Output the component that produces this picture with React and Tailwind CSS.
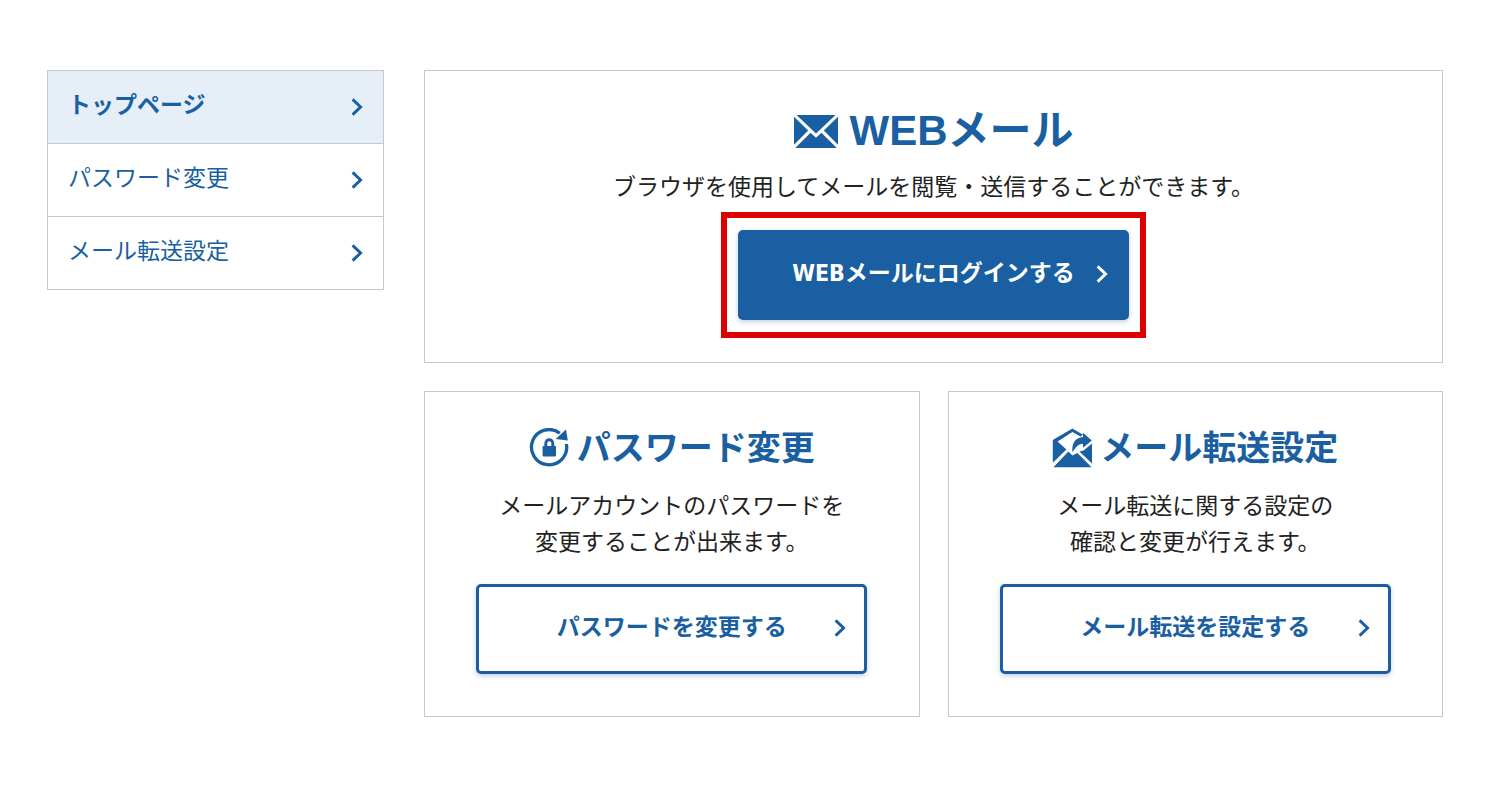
import React from "react";

function Chevron({ className = "" }) {
  return (
    <svg viewBox="0 0 12 18" className={`h-[18px] w-3 shrink-0 ${className}`} fill="none" stroke="currentColor" strokeWidth="2.9" aria-hidden="true">
      <path d="M1.6 1.4 L9.6 9 L1.6 16.6" />
    </svg>
  );
}

function MailIcon() {
  return (
    <svg viewBox="0 0 44 33" className="h-[33px] w-11 shrink-0" fill="currentColor" aria-hidden="true">
      <path d="M2.5 0 H41.5 L26.5 14.2 L22 18.6 L17.5 14.2 Z" />
      <path d="M0 1.8 L14.2 15.4 L0 29.8 Z" />
      <path d="M44 1.8 L29.8 15.4 L44 29.8 Z" />
      <path d="M1.2 33 L16.6 17.8 L22 22.8 L27.4 17.8 L42.8 33 Z" />
    </svg>
  );
}

function PasswordIcon() {
  return (
    <svg viewBox="0 0 40 40" className="size-10 shrink-0" fill="none" stroke="currentColor" aria-hidden="true">
      <path d="M30.8 5.2 A17.6 17.6 0 1 0 37.4 16" strokeWidth="3.3" />
      <path d="M37 1.4 L38.8 12.6 L26.6 11 Z" fill="currentColor" stroke="none" />
      <rect x="13.6" y="18" width="13.4" height="10.4" rx="0.8" fill="currentColor" stroke="none" />
      <path d="M16.8 18.6 V15.4 A3.5 3.6 0 0 1 23.8 15.4 V18.6" strokeWidth="2.9" />
    </svg>
  );
}

function ForwardIcon() {
  return (
    <svg viewBox="0 0 40 40" className="size-10 shrink-0" fill="currentColor" aria-hidden="true">
      <path d="M0.8 12 L20.4 0.4 L31 6.8 L28.6 8.4 L20.4 4 L5.6 13.4 L14.4 21.4 L0.8 34.8 Z" />
      <path d="M31 4.8 L39.8 12.4 L31 19.8 V15.8 C26.6 15.8 24.4 18.6 20.4 24.2 C19.6 15.6 23 9.6 31 9 Z" />
      <path d="M40 15.6 V35.4 L27.4 23.6 L31.6 22.4 Z" />
      <path d="M1.4 39.2 L16.4 23.4 L20.4 27.4 L25.4 25 L39.6 39.2 Z" />
    </svg>
  );
}

const menu = [
  { label: "トップページ", active: true },
  { label: "パスワード変更" },
  { label: "メール転送設定" },
];

function Sidebar() {
  return (
    <nav className="w-[337px] shrink-0 border border-[#c8c8c8]" aria-label="メニュー">
      <ul className="divide-y divide-[#c8c8c8]">
        {menu.map((item) => (
          <li key={item.label}>
            <a
              href="#"
              aria-current={item.active ? "page" : undefined}
              className={`flex items-center justify-between pt-4 pr-5 pb-5 pl-5 text-[23px] leading-9 ${item.active ? "bg-[#e6eef8] font-bold" : ""}`}
            >
              <span>{item.label}</span>
              <Chevron className="mt-1" />
            </a>
          </li>
        ))}
      </ul>
    </nav>
  );
}

function ActionButton({ children, primary }) {
  return (
    <button
      type="button"
      className={`grid w-[391px] max-w-full grid-cols-[20px_1fr_20px] items-center rounded-[5px] border-3 border-[#195fa1] px-[18px] pt-[22px] pb-[26px] text-[23px] leading-9 font-bold shadow-[0_2px_5px_rgba(25,60,130,0.25)] ${primary ? "bg-[#195fa1] text-white" : "bg-white"}`}
    >
      <span className="col-start-2 whitespace-nowrap">{children}</span>
      <Chevron className="mt-0.5 justify-self-end" />
    </button>
  );
}

function Card({ icon, title, lines, button }) {
  return (
    <section className="flex min-w-0 flex-1 flex-col items-center border border-[#c8c8c8] px-4 pt-[30px] pb-[42px]">
      <h2 className="flex items-center gap-2 text-[34px] leading-[52px] font-bold">
        {icon}
        {title}
      </h2>
      <p className="mt-[14px] mb-6 text-center text-[23px] leading-9 text-[#222222]">
        {lines[0]}
        <br />
        {lines[1]}
      </p>
      <ActionButton>{button}</ActionButton>
    </section>
  );
}

export default function App() {
  return (
    <div className="flex min-h-screen items-start gap-10 bg-white px-[47px] py-[70px] font-['DejaVu_Sans_Condensed','Noto_Sans_CJK_JP',sans-serif] text-[#195fa1]">
      <Sidebar />
      <main className="flex min-w-0 flex-1 flex-col gap-7">
        <section className="flex flex-col items-center border border-[#c8c8c8] pt-7 pb-6">
          <h1 className="flex items-center gap-3 font-['Liberation_Sans','Noto_Sans_CJK_JP',sans-serif] text-[42px] leading-[64px] font-bold">
            <MailIcon />
            WEBメール
          </h1>
          <p className="mt-1 mb-[9px] text-center font-['Noto_Sans_CJK_JP',sans-serif] text-[23px] leading-9 text-[#222222]">
            ブラウザを使用してメールを閲覧・送信することができます。
          </p>
          <div className="border-6 border-[#dd0000] px-[11px] py-3">
            <ActionButton primary>WEBメールにログインする</ActionButton>
          </div>
        </section>
        <div className="flex gap-7">
          <Card
            icon={<PasswordIcon />}
            title="パスワード変更"
            lines={["メールアカウントのパスワードを", "変更することが出来ます。"]}
            button="パスワードを変更する"
          />
          <Card
            icon={<ForwardIcon />}
            title="メール転送設定"
            lines={["メール転送に関する設定の", "確認と変更が行えます。"]}
            button="メール転送を設定する"
          />
        </div>
      </main>
    </div>
  );
}
